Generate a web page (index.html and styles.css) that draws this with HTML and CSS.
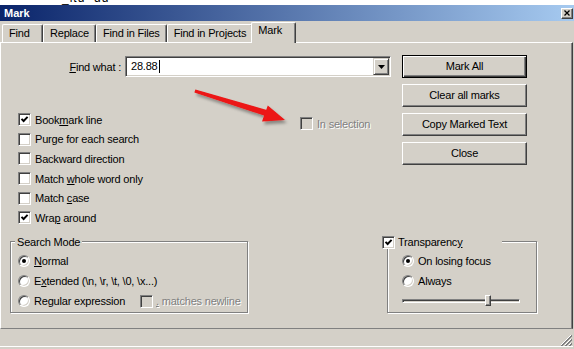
FILE: index.html
```html
<!DOCTYPE html>
<html lang="en">
<head>
    <meta charset="UTF-8">
    <meta name="viewport" content="width=device-width, initial-scale=1.0">
    <title>Mark</title>
    <link rel="stylesheet" href="styles.css">
</head>
<body>
    <div class="behind"><span>_ltd &nbsp;dd</span></div>

    <div class="window">
        <div class="titlebar">
            <span class="title">Mark</span>
            <span class="close-btn">
                <svg width="6" height="6" viewBox="0 0 6 6"><path d="M0.5 0.5 L5.5 5.5 M5.5 0.5 L0.5 5.5" stroke="#000" stroke-width="1.3"/></svg>
            </span>
        </div>

        <div class="tabs">
            <div class="tab tab-first">Find</div>
            <div class="tab">Replace</div>
            <div class="tab">Find in Files</div>
            <div class="tab">Find in Projects</div>
            <div class="tab active">Mark</div>
        </div>

        <div class="panel">
            <div class="upper">
                <div class="left">
                    <div class="find-row">
                        <span class="find-label"><u>F</u>ind what :</span>
                        <div class="combo">
                            <span class="combo-text">28.88<span class="caret"></span></span>
                            <span class="combo-btn">
                                <svg width="7" height="4" viewBox="0 0 7 4"><path d="M0 0 H7 L3.5 4 Z" fill="#000"/></svg>
                            </span>
                        </div>
                    </div>

                    <div class="options">
                        <div class="checklist">
                            <div class="check-row"><span class="box"><svg width="9" height="9" viewBox="0 0 9 9"><path d="M1.5 3.8 L3.6 6 L7.6 1.8" fill="none" stroke="#000" stroke-width="1.9"/></svg></span><span>Book<u>m</u>ark line</span></div>
                            <div class="check-row"><span class="box"></span><span>Purge for each search</span></div>
                            <div class="check-row"><span class="box"></span><span>Backward direction</span></div>
                            <div class="check-row"><span class="box"></span><span>Match <u>w</u>hole word only</span></div>
                            <div class="check-row"><span class="box"></span><span>Match <u>c</u>ase</span></div>
                            <div class="check-row"><span class="box"><svg width="9" height="9" viewBox="0 0 9 9"><path d="M1.5 3.8 L3.6 6 L7.6 1.8" fill="none" stroke="#000" stroke-width="1.9"/></svg></span><span>Wra<u>p</u> around</span></div>
                        </div>
                        <div class="check-row in-selection disabled"><span class="box"></span><span>In selection</span></div>
                    </div>
                </div>

                <div class="buttons">
                    <div class="btn btn-default">Mark All</div>
                    <div class="btn">Clear all marks</div>
                    <div class="btn">Copy Marked Text</div>
                    <div class="btn">Close</div>
                </div>
            </div>

            <div class="lower">
                <div class="group search-group">
                    <div class="group-title">Search Mode</div>
                    <div class="radio-row"><span class="radio checked"></span><span><u>N</u>ormal</span></div>
                    <div class="radio-row"><span class="radio"></span><span>E<u>x</u>tended (\n, \r, \t, \0, \x...)</span></div>
                    <div class="radio-row">
                        <span class="regex-item"><span class="radio"></span><span>Re<u>g</u>ular expression</span></span>
                        <span class="newline-item disabled"><span class="box"></span><span><u>.</u> matches newline</span></span>
                    </div>
                </div>

                <div class="group transparency-group">
                    <div class="group-title title-check">
                        <span class="box"><svg width="9" height="9" viewBox="0 0 9 9"><path d="M1.5 3.8 L3.6 6 L7.6 1.8" fill="none" stroke="#000" stroke-width="1.9"/></svg></span><span>Transparenc<u>y</u></span>
                    </div>
                    <div class="radio-row inset"><span class="radio checked"></span><span>On losing focus</span></div>
                    <div class="radio-row inset"><span class="radio"></span><span>Always</span></div>
                    <div class="slider-row">
                        <div class="track"><span class="thumb" style="left: 82px"></span></div>
                    </div>
                </div>
            </div>
        </div>

        <div class="statusbar">
            <svg class="grip" width="12" height="12" viewBox="0 0 12 12">
                <path d="M11 1 L1 11 M11 5 L5 11 M11 9 L9 11" stroke="#fff" stroke-width="1"/>
                <path d="M12 1 L1 12 M12 2 L2 12 M12 5 L5 12 M12 6 L6 12 M12 9 L9 12 M12 10 L10 12" stroke="#808080" stroke-width="1"/>
            </svg>
        </div>
    </div>

    <!-- annotation drawn over the dialog -->
    <svg class="arrow" width="574" height="349" viewBox="0 0 574 349">
        <defs>
            <filter id="shadow" x="-20%" y="-20%" width="140%" height="160%">
                <feDropShadow dx="2" dy="3" stdDeviation="1.5" flood-color="#000" flood-opacity="0.35"/>
            </filter>
        </defs>
        <g filter="url(#shadow)" fill="#ec1313">
            <path d="M195.4 89.4 L268.6 110.6 L267 116.6 L194.4 92.4 Z"/>
            <path d="M285 120 L262 121.5 L267.8 105.6 Z"/>
        </g>
    </svg>
</body>
</html>
```

FILE: styles.css
```css
body {
    margin: 0;
    width: 574px;
    height: 349px;
    overflow: hidden;
    position: relative;
    font-family: "Liberation Sans", Arial, sans-serif;
    font-size: 11px;
    letter-spacing: -0.2px;
    color: #000;
    background-color: #fff;
}
.behind {
    height: 5px;
    overflow: hidden;
    padding-left: 62px;
    background-color: #fff;
}
.behind span {
    display: block;
    margin-top: -8px;
    font-size: 12px;
    line-height: 13px;
    letter-spacing: 1px;
}
.window {
    height: 344px;
    background-color: #d4d0c8;
}
.titlebar {
    height: 16px;
    display: flex;
    align-items: center;
    justify-content: space-between;
    padding: 0 1px 0 4px;
    background: linear-gradient(to right, #0a246a, #a6caf0);
}
.title {
    color: #fff;
    font-weight: bold;
    letter-spacing: 0;
}
.close-btn {
    width: 12px;
    height: 11px;
    box-sizing: border-box;
    display: flex;
    align-items: center;
    justify-content: center;
    border: 1px solid;
    border-color: #fff #404040 #404040 #fff;
    box-shadow: inset -1px -1px #808080;
    background-color: #d4d0c8;
}

/* tabs */
.tabs {
    display: flex;
    align-items: flex-end;
    height: 20px;
    margin-top: 1px;
    padding-left: 2px;
}
.tab {
    height: 18px;
    box-sizing: border-box;
    padding: 1px 6px 0 6px;
    line-height: 14px;
    white-space: nowrap;
    border-top: 1px solid #fff;
    border-left: 1px solid #fff;
    border-right: 1px solid #404040;
    border-radius: 2px 2px 0 0;
    box-shadow: inset -1px 0 #808080;
}
.tab-first {
    min-width: 41px;
}
.tab.active {
    position: relative;
    z-index: 1;
    height: 21px;
    min-width: 45px;
    margin: 0 -2px -1px -2px;
    padding-top: 0;
    background-color: #d4d0c8;
}

/* tab page */
.panel {
    width: 573px;
    height: 287px;
    box-sizing: border-box;
    padding-top: 12px;
    border: 1px solid;
    border-color: #fff #404040 #808080 #fff;
    box-shadow: inset -1px 0 #808080;
}
.upper {
    display: flex;
    height: 186px;
}
.left {
    width: 401px;
}
.find-row {
    display: flex;
    align-items: center;
    height: 21px;
    margin-top: 1px;
}
.find-label {
    width: 120px;
    text-align: right;
}
.combo {
    display: flex;
    width: 266px;
    height: 21px;
    margin-left: 4px;
    box-sizing: border-box;
    padding: 1px;
    border: 1px solid;
    border-color: #808080 #fff #fff #808080;
    box-shadow: inset 1px 1px #404040, inset -1px -1px #d4d0c8;
    background-color: #fff;
}
.combo-text {
    flex: 1;
    padding-left: 4px;
    line-height: 17px;
}
.caret {
    display: inline-block;
    width: 1px;
    height: 13px;
    margin-left: 1px;
    vertical-align: -3px;
    background-color: #000;
}
.combo-btn {
    width: 16px;
    height: 17px;
    box-sizing: border-box;
    display: flex;
    align-items: center;
    justify-content: center;
    border: 1px solid;
    border-color: #d4d0c8 #404040 #404040 #d4d0c8;
    box-shadow: inset 1px 1px #fff, inset -1px -1px #808080;
    background-color: #d4d0c8;
}
.options {
    display: flex;
    margin-top: 33px;
}
.checklist {
    width: 299px;
    box-sizing: border-box;
    padding-left: 17px;
}
.check-row {
    display: flex;
    align-items: center;
    height: 19.6px;
    white-space: nowrap;
}
.in-selection {
    margin-top: 4px;
}
.box {
    width: 13px;
    height: 13px;
    box-sizing: border-box;
    flex-shrink: 0;
    display: flex;
    align-items: center;
    justify-content: center;
    margin-right: 4px;
    border: 1px solid;
    border-color: #808080 #fff #fff #808080;
    box-shadow: inset 1px 1px #404040, inset -1px -1px #d4d0c8;
    background-color: #fff;
}
.disabled {
    color: #808080;
    text-shadow: 1px 1px 0 #fff;
}
.disabled .box {
    background-color: #d4d0c8;
}
.buttons {
    display: flex;
    flex-direction: column;
    gap: 6px;
    width: 125px;
}
.btn {
    height: 23px;
    box-sizing: border-box;
    line-height: 21px;
    text-align: center;
    border: 1px solid;
    border-color: #fff #404040 #404040 #fff;
    box-shadow: inset -1px -1px #808080;
}
.btn-default {
    border-color: #000;
    box-shadow: inset 1px 1px #fff, inset -1px -1px #404040, inset -2px -2px #808080;
}

/* group boxes */
.lower {
    display: flex;
    align-items: flex-start;
}
.group {
    height: 72px;
    box-sizing: border-box;
    border: 1px solid #808080;
    box-shadow: inset 1px 1px #fff, 1px 1px #fff;
}
.search-group {
    width: 238px;
    margin-left: 9px;
}
.transparency-group {
    width: 150px;
    margin-left: 139px;
}
.group-title {
    width: fit-content;
    height: 13px;
    line-height: 13px;
    margin: -6px 0 0 4px;
    padding: 0 2px;
    background-color: #d4d0c8;
}
.title-check {
    display: flex;
    align-items: center;
    width: 120px;
    box-sizing: border-box;
    margin-left: -6px;
    padding: 0;
}
.title-check .box {
    margin-right: 3px;
}
.radio-row {
    display: flex;
    align-items: center;
    height: 20px;
    padding-left: 7px;
    white-space: nowrap;
}
.group-title + .radio-row {
    margin-top: 2px;
}
.radio-row.inset {
    padding-left: 14px;
}
.radio {
    width: 12px;
    height: 12px;
    box-sizing: border-box;
    flex-shrink: 0;
    display: flex;
    align-items: center;
    justify-content: center;
    margin-right: 4px;
    border-radius: 50%;
    border: 1px solid;
    border-color: #808080 #fff #fff #808080;
    box-shadow: inset 1px 1px #404040, inset -1px -1px #d4d0c8;
    background-color: #fff;
}
.radio.checked::after {
    content: "";
    width: 4px;
    height: 4px;
    border-radius: 50%;
    background-color: #000;
}
.regex-item {
    display: flex;
    align-items: center;
    width: 122px;
}
.newline-item {
    display: flex;
    align-items: center;
    width: 103px;
    overflow: hidden;
}
.newline-item .box {
    margin-right: 3px;
}
.slider-row {
    display: flex;
    align-items: center;
    height: 20px;
    padding-left: 14px;
}
.track {
    position: relative;
    width: 118px;
    height: 4px;
    box-sizing: border-box;
    border: 1px solid;
    border-color: #808080 #fff #fff #808080;
    box-shadow: inset 1px 1px #404040;
}
.thumb {
    position: absolute;
    top: -5px;
    width: 6px;
    height: 11px;
    box-sizing: border-box;
    border: 1px solid;
    border-color: #fff #404040 #404040 #fff;
    box-shadow: inset -1px -1px #808080;
    background-color: #d4d0c8;
}

/* status bar */
.statusbar {
    width: 573px;
    height: 18px;
    box-sizing: border-box;
    display: flex;
    justify-content: flex-end;
    align-items: flex-end;
    border-bottom: 1px solid #fff;
}
.grip {
    display: block;
    margin-right: 1px;
}
.arrow {
    position: absolute;
    top: 0;
    left: 0;
    pointer-events: none;
}
```
